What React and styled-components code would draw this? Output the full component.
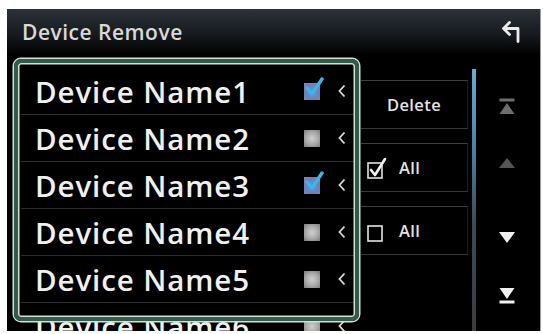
import React from "react";
import styled, { createGlobalStyle } from "styled-components";

const Global = createGlobalStyle`
  html, body { margin: 0; padding: 0; background: #ffffff; }
  body { font-family: "Open Sans", "Noto Sans", sans-serif; }
`;

const Screen = styled.div`
  margin: 9px 3px 0 7px;
  width: 533px;
  height: 322px;
  background: #000;
  display: flex;
  flex-direction: column;
  overflow: hidden;
  box-shadow: 1px 0 0 #9a9a9a;
`;

const Header = styled.div`
  height: 46px;
  flex: none;
  display: flex;
  align-items: center;
  justify-content: space-between;
  padding: 0 18px 0 15px;
  background: linear-gradient(180deg, #2b3238 0%, #161a1e 55%, #000 100%);
`;

const Title = styled.div`
  color: #d8d8d8;
  font-size: 21px;
  font-weight: 600;
  letter-spacing: 0.5px;
  margin-top: -1px;
`;

const Body = styled.div`
  position: relative;
  flex: 1;
  display: flex;
`;

const ListCol = styled.div`
  margin-left: 14px;
  width: 334px;
  padding-top: 13px;
  display: flex;
  flex-direction: column;
`;

const Row = styled.div`
  height: 46px;
  flex: none;
  display: flex;
  align-items: center;
  border-bottom: 1px solid #2c2c2c;
  padding-left: 14px;
`;

const Name = styled.div`
  flex: 1;
  color: #f0f0f0;
  font-size: 29.5px;
  font-weight: 600;
  letter-spacing: 0.9px;
  line-height: 1;
  margin-top: 2px;
`;

const Box = styled.div`
  width: 16px;
  height: 17px;
  margin-right: 18px;
  position: relative;
  background: ${(p) =>
    p.$checked
      ? "radial-gradient(circle at 50% 55%, #4aa3dc 0%, #6f7fb8 60%, #9a7fa8 100%)"
      : "radial-gradient(circle at 50% 50%, #d0d0d0 0%, #a8a8a8 55%, #7a7a7a 100%)"};
`;

const CheckMark = styled.svg`
  position: absolute;
  left: 0;
  top: -6px;
`;

const Chevron = styled.svg`
  margin-right: 9px;
`;

const Frame = styled.div`
  position: absolute;
  left: 7px;
  top: 4px;
  width: 337px;
  height: 254px;
  border: 4px solid #2f5d4a;
  border-radius: 7px;
  box-shadow: 0 0 0 1.5px #d6e0d9, inset 0 0 0 1.5px #d6e0d9;
  pointer-events: none;
`;

const ButtonCol = styled.div`
  margin-left: 6px;
  width: 107px;
  padding-top: 25px;
  display: flex;
  flex-direction: column;
  gap: 14px;
`;

const Button = styled.div`
  height: 47px;
  display: flex;
  align-items: center;
  justify-content: ${(p) => (p.$center ? "center" : "flex-start")};
  gap: 11px;
  padding-left: ${(p) => (p.$center ? "0" : "5px")};
  border-top: 1px solid #3e3e3e;
  border-bottom: 1px solid #3a3a3a;
  border-right: 1px solid #1c1c1c;
  color: #e4e4e4;
  font-size: 16.5px;
  font-weight: 600;
  letter-spacing: 0.4px;
`;

const ScrollTrack = styled.div`
  margin-left: 4px;
  margin-top: 14px;
  width: 4px;
  background: linear-gradient(180deg, #6aaad8 0%, #4a7ea4 30%, #3c4a56 55%, #3a3a3a 100%);
`;

const ArrowCol = styled.div`
  flex: 1;
  display: flex;
  flex-direction: column;
  align-items: center;
  padding-top: 43px;
  padding-right: 3px;
`;

const ArrowSlot = styled.div`
  height: ${(p) => p.$h}px;
  display: flex;
  align-items: flex-start;
  justify-content: center;
`;

const names = [
  { n: "Device Name1", c: true },
  { n: "Device Name2", c: false },
  { n: "Device Name3", c: true },
  { n: "Device Name4", c: false },
  { n: "Device Name5", c: false },
  { n: "Device Name6", c: false },
];

function Check({ checked }) {
  return (
    <Box $checked={checked}>
      {checked && (
        <CheckMark width="20" height="22" viewBox="0 0 20 22">
          <path d="M3 11 L8 17 L18 2" fill="none" stroke="#3fb4e8" strokeWidth="3.4" strokeLinecap="round" strokeLinejoin="round" />
        </CheckMark>
      )}
    </Box>
  );
}

function SmallBox({ checked }) {
  return (
    <svg width="22" height="22" viewBox="0 0 22 22">
      <rect x="2" y="6" width="14" height="15" fill="none" stroke="#e4e4e4" strokeWidth="1.6" />
      {checked && (
        <path d="M5 13 L9 18 L19 2" fill="none" stroke="#f0f0f0" strokeWidth="2.6" strokeLinecap="round" strokeLinejoin="round" />
      )}
    </svg>
  );
}

export default function App() {
  return (
    <>
      <Global />
      <Screen>
        <Header>
          <Title>Device Remove</Title>
          <svg width="21" height="22" viewBox="0 0 21 22">
            <path d="M8.5 1.5 L2.5 7.5 L8.5 13.5 M2.5 7.5 H17 V20.5" fill="none" stroke="#ececec" strokeWidth="2.8" strokeLinecap="round" strokeLinejoin="round" />
          </svg>
        </Header>
        <Body>
          <ListCol>
            {names.map((r) => (
              <Row key={r.n}>
                <Name>{r.n}</Name>
                <Check checked={r.c} />
                <Chevron width="8" height="14" viewBox="0 0 8 14">
                  <path d="M6.5 1.5 L1.5 7 L6.5 12.5" fill="none" stroke="#dcdcdc" strokeWidth="1.8" />
                </Chevron>
              </Row>
            ))}
          </ListCol>
          <Frame />
          <ButtonCol>
            <Button $center>Delete</Button>
            <Button>
              <SmallBox checked />
              All
            </Button>
            <Button>
              <SmallBox />
              All
            </Button>
          </ButtonCol>
          <ScrollTrack />
          <ArrowCol>
            <ArrowSlot $h={60}>
              <svg width="16" height="17" viewBox="0 0 16 17">
                <rect x="0.5" y="0.5" width="15" height="3" fill="#6e6e6e" />
                <polygon points="8,5 15.5,16 0.5,16" fill="#6e6e6e" />
              </svg>
            </ArrowSlot>
            <ArrowSlot $h={74}>
              <svg width="16" height="10" viewBox="0 0 16 10">
                <polygon points="8,0 16,10 0,10" fill="#555" />
              </svg>
            </ArrowSlot>
            <ArrowSlot $h={55}>
              <svg width="16" height="11" viewBox="0 0 16 11">
                <polygon points="0,0 16,0 8,11" fill="#f0f0f0" />
              </svg>
            </ArrowSlot>
            <ArrowSlot $h={20}>
              <svg width="16" height="17" viewBox="0 0 16 17">
                <polygon points="0.5,1 15.5,1 8,12" fill="#f0f0f0" />
                <rect x="0.5" y="13.5" width="15" height="3" fill="#f0f0f0" />
              </svg>
            </ArrowSlot>
          </ArrowCol>
        </Body>
      </Screen>
    </>
  );
}
